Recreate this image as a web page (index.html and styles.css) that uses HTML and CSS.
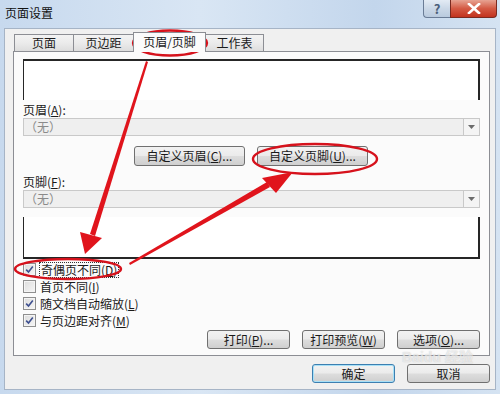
FILE: index.html
```html
<!DOCTYPE html>
<html lang="zh-CN">
<head>
  <meta charset="UTF-8">
  <title>页面设置</title>
  <link rel="stylesheet" href="styles.css">
</head>
<body>

  <div class="window">
    <div class="titlebar">
      <span class="title">页面设置</span>
      <div class="caption-btns">
        <div class="cap-btn help">?</div>
        <div class="cap-btn close">
          <svg width="14" height="11" viewBox="0 0 14 11"><path d="M2 1 L12 10 M12 1 L2 10" stroke="#fff" stroke-width="2.6" stroke-linecap="square"/></svg>
        </div>
      </div>
    </div>

    <div class="client">
      <div class="tabs">
        <div class="tab t1">页面</div>
        <div class="tab t2">页边距</div>
        <div class="tab t3 active">页眉/页脚</div>
        <div class="tab t4">工作表</div>
      </div>

      <div class="panel">
        <div class="preview preview-head"></div>

        <div class="field-label">页眉(<u>A</u>):</div>
        <div class="combo">
          <span class="combo-text">（无）</span>
          <span class="combo-arrow"><svg width="7" height="4" viewBox="0 0 7 4"><path d="M0 0 H7 L3.5 4 Z" fill="#6b6b6b"/></svg></span>
        </div>

        <div class="custom-row">
          <button class="btn wide">自定义页眉(<u>C</u>)...</button>
          <button class="btn wide">自定义页脚(<u>U</u>)...</button>
        </div>

        <div class="field-label">页脚(<u>F</u>):</div>
        <div class="combo">
          <span class="combo-text">（无）</span>
          <span class="combo-arrow"><svg width="7" height="4" viewBox="0 0 7 4"><path d="M0 0 H7 L3.5 4 Z" fill="#6b6b6b"/></svg></span>
        </div>

        <div class="preview preview-foot"></div>

        <div class="checks">
          <div class="check-row">
            <span class="box"><svg width="9" height="9" viewBox="0 0 9 9"><path d="M1.2 4.6 L3.5 7 L7.8 1.6" stroke="#3d4f8f" stroke-width="1.6" fill="none"/></svg></span>
            <span class="focus">奇偶页不同(<u>D</u>)</span>
          </div>
          <div class="check-row">
            <span class="box"></span>
            <span>首页不同(<u>I</u>)</span>
          </div>
          <div class="check-row">
            <span class="box"><svg width="9" height="9" viewBox="0 0 9 9"><path d="M1.2 4.6 L3.5 7 L7.8 1.6" stroke="#3d4f8f" stroke-width="1.6" fill="none"/></svg></span>
            <span>随文档自动缩放(<u>L</u>)</span>
          </div>
          <div class="check-row">
            <span class="box"><svg width="9" height="9" viewBox="0 0 9 9"><path d="M1.2 4.6 L3.5 7 L7.8 1.6" stroke="#3d4f8f" stroke-width="1.6" fill="none"/></svg></span>
            <span>与页边距对齐(<u>M</u>)</span>
          </div>
        </div>

        <div class="print-row">
          <button class="btn">打印(<u>P</u>)...</button>
          <button class="btn">打印预览(<u>W</u>)</button>
          <button class="btn">选项(<u>O</u>)...</button>
        </div>
      </div>

      <div class="dialog-row">
        <button class="btn default">确定</button>
        <button class="btn">取消</button>
      </div>
    </div>

    <div class="watermark">Baidu 经验</div>

    <svg class="marks" width="500" height="394" viewBox="0 0 500 394">
      <ellipse cx="170" cy="43" rx="37" ry="12.5" fill="none" stroke="#d6121c" stroke-width="2.4"/>
      <ellipse cx="315" cy="159" rx="62" ry="15" fill="none" stroke="#d6121c" stroke-width="2.4"/>
      <ellipse cx="68" cy="269" rx="53" ry="10" fill="none" stroke="#d6121c" stroke-width="2.4"/>
      <polygon points="146,61 148,62 95,236 90,234" fill="#e0141c"/>
      <polygon points="80,232 102,238 85,254" fill="#e0141c"/>
      <polygon points="129,263 130,265 270,187 267,182" fill="#e0141c"/>
      <polygon points="262,178 276,193 293,172" fill="#e0141c"/>
    </svg>
  </div>

</body>
</html>
```

FILE: styles.css
```css
body {
  margin: 0;
  font-family: "Noto Sans CJK SC", "Liberation Sans", sans-serif;
  font-size: 12px;
  color: #1a1a1a;
}

.window {
  position: relative;
  width: 500px;
  height: 394px;
  box-sizing: border-box;
  padding: 0 4px 4px 4px;
  display: flex;
  flex-direction: column;
  background: linear-gradient(to right, #c7d9ee, #d9e6f4 40%, #c3d6ec 75%, #d5e3f2);
  overflow: hidden;
}

.titlebar {
  height: 28px;
  display: flex;
  align-items: flex-start;
}

.title {
  margin: 5px 0 0 1px;
  line-height: 16px;
  color: #111;
}

.caption-btns {
  margin-left: auto;
  margin-right: -1px;
  display: flex;
}

.cap-btn {
  height: 18px;
  display: flex;
  align-items: center;
  justify-content: center;
  border: 1px solid #6a7c96;
  border-top: none;
  box-sizing: border-box;
}

.cap-btn.help {
  width: 27px;
  border-radius: 0 0 0 4px;
  border-right: none;
  background: linear-gradient(#e3ebf4, #cbd8e7 50%, #b9cade);
  color: #4b5e7a;
  font-size: 13px;
  font-weight: bold;
}

.cap-btn.close {
  width: 47px;
  border-radius: 0 0 4px 0;
  border-color: #7a2a20;
  background: linear-gradient(#e7a392, #d45a44 50%, #c2331f);
}

.client {
  flex: 1;
  background: #f0f0f0;
  border: 1px solid #a6b4c6;
  padding: 0 5px 0 8px;
  display: flex;
  flex-direction: column;
}

.tabs {
  display: flex;
  align-items: flex-end;
  height: 20px;
  padding: 3px 0 0 1px;
  margin-bottom: -1px;
}

.tab {
  height: 17px;
  margin-bottom: 1px;
  box-sizing: border-box;
  border: 1px solid #8c8e94;
  border-bottom: none;
  background: linear-gradient(#f3f3f3, #ebebeb 50%, #dddddd);
  text-align: center;
  line-height: 16px;
  margin-left: -1px;
}

.t1 { width: 60px; margin-left: 0; }
.t2 { width: 61px; }
.t3 { width: 73px; }
.t4 { width: 59px; }

.tab.active {
  position: relative;
  z-index: 2;
  height: 20px;
  margin-bottom: 0;
  background: #fbfbfb;
  line-height: 18px;
}

.panel {
  position: relative;
  background: #fbfbfb;
  border: 1px solid #8c8e94;
  padding: 7px 9px 6px 9px;
  display: flex;
  flex-direction: column;
}

.preview {
  background: #fff;
  border: 1px solid #262626;
}

.preview-head {
  height: 39px;
  border-top-width: 2px;
  border-right-width: 2px;
  border-bottom: none;
}

.preview-foot {
  margin-top: 9px;
  height: 40px;
  border-bottom-width: 2px;
  border-right-width: 2px;
  border-top: none;
}

.field-label {
  margin-top: 3px;
  line-height: 14px;
}

.panel .field-label + .combo {
  margin-top: 1px;
}

.custom-row + .field-label {
  margin-top: 9px;
}

.combo {
  height: 18px;
  box-sizing: border-box;
  border: 1px solid #c9c9c9;
  background: #efefef;
  display: flex;
  align-items: center;
  color: #8a8a8a;
}

.combo-text {
  padding-left: 1px;
  line-height: 16px;
}

.combo-arrow {
  margin-left: auto;
  width: 16px;
  height: 16px;
  box-sizing: border-box;
  border-left: 1px solid #c9c9c9;
  display: flex;
  align-items: center;
  justify-content: center;
  background: #f4f4f4;
}

.btn {
  font-family: inherit;
  font-size: 12px;
  color: #1a1a1a;
  width: 83px;
  height: 19px;
  padding: 0;
  border: 1px solid #707070;
  border-radius: 3px;
  background: linear-gradient(#f2f2f2, #ebebeb 48%, #dddddd 52%, #cfcfcf);
  line-height: 16px;
}

.btn.wide {
  width: 111px;
  height: 20px;
}

.btn.default {
  border-color: #3c7fb1;
  box-shadow: inset 0 0 0 1px #a7e0f7;
}

.custom-row {
  display: flex;
  gap: 12px;
  margin-top: 10px;
  padding-left: 111px;
}

.checks {
  margin-top: 2px;
  display: flex;
  flex-direction: column;
}

.check-row {
  height: 17px;
  display: flex;
  align-items: center;
  gap: 4px;
}

.box {
  width: 13px;
  height: 13px;
  box-sizing: border-box;
  border: 1px solid #8f8f8f;
  background: linear-gradient(135deg, #dcdcdc, #f6f6f6);
  box-shadow: inset 0 0 0 1px #f4f4f4;
  display: flex;
  align-items: center;
  justify-content: center;
}

.focus {
  outline: 1px dotted #333;
  outline-offset: 0;
  line-height: 14px;
  padding: 0 1px;
}

.print-row {
  margin-top: 1px;
  display: flex;
  justify-content: flex-end;
  gap: 12px;
}

.dialog-row {
  margin-top: 8px;
  display: flex;
  justify-content: flex-end;
  gap: 12px;
}

.watermark {
  position: absolute;
  left: 402px;
  top: 350px;
  line-height: 14px;
  font-family: "Liberation Sans", sans-serif;
  font-size: 14px;
  font-weight: bold;
  color: rgba(255, 255, 255, 0.6);
  text-shadow: 0 0 1px rgba(120, 120, 120, 0.4);
  pointer-events: none;
}

.marks {
  position: absolute;
  left: 0;
  top: 0;
  pointer-events: none;
}
```
